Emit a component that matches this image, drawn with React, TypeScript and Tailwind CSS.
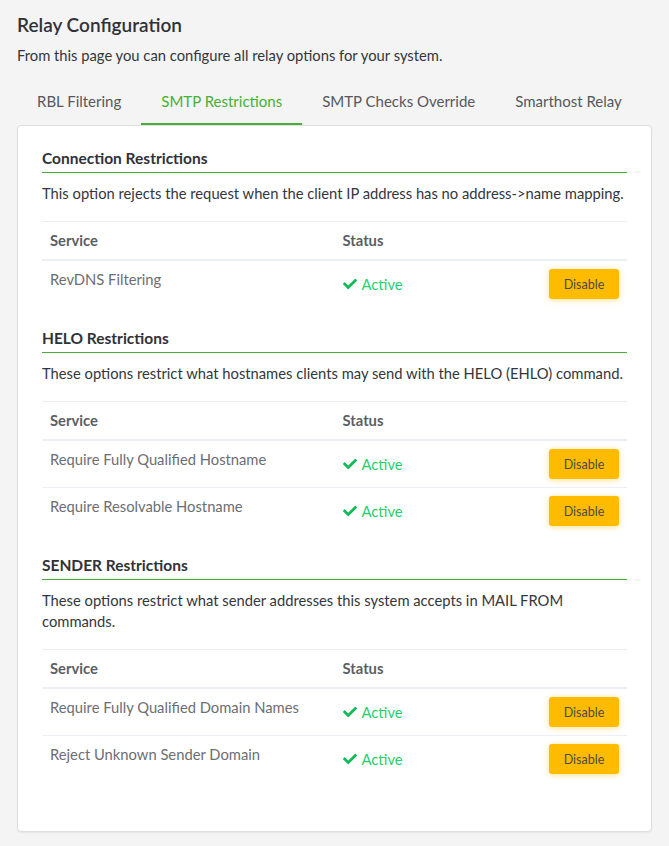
import React from "react";
import { FaCheck } from "react-icons/fa";

type Row = { name: string };
type Section = { title: string; description: string; rows: Row[] };

const sections: Section[] = [
  {
    title: "Connection Restrictions",
    description:
      "This option rejects the request when the client IP address has no address->name mapping.",
    rows: [{ name: "RevDNS Filtering" }],
  },
  {
    title: "HELO Restrictions",
    description:
      "These options restrict what hostnames clients may send with the HELO (EHLO) command.",
    rows: [
      { name: "Require Fully Qualified Hostname" },
      { name: "Require Resolvable Hostname" },
    ],
  },
  {
    title: "SENDER Restrictions",
    description:
      "These options restrict what sender addresses this system accepts in MAIL FROM commands.",
    rows: [
      { name: "Require Fully Qualified Domain Names" },
      { name: "Reject Unknown Sender Domain" },
    ],
  },
];

const tabs = ["RBL Filtering", "SMTP Restrictions", "SMTP Checks Override", "Smarthost Relay"];

function RestrictionSection({ section }: { section: Section }) {
  return (
    <section>
      <h3 className="text-[15.5px] leading-[22px] font-bold text-[#2f3237] pb-[3px] border-b border-b-[#45b035]">
        {section.title}
      </h3>
      <p className="mt-[10px] text-[14.75px] leading-[21px] text-[#33363b]">{section.description}</p>
      <table className="mt-[17px] mb-5 w-full border-collapse text-[14.75px] leading-[21px]">
        <thead>
          <tr className="border-t border-t-[#eceef1] border-b-2 border-b-[#eceff3]">
            <th className="w-1/2 px-2 py-2 text-left font-bold text-[#5b5e63]">Service</th>
            <th className="px-2 py-2 text-left font-bold text-[#5b5e63]">Status</th>
            <th className="px-2 py-2" />
          </tr>
        </thead>
        <tbody>
          {section.rows.map((row, i) => (
            <tr
              key={row.name}
              className={i < section.rows.length - 1 ? "border-b border-b-[#eceff3]" : ""}
            >
              <td className="px-2 pt-2 pb-2 align-top text-[#6b6e73]">{row.name}</td>
              <td className="px-2 py-2 align-middle">
                <span className="flex items-center gap-[5px] text-[#25d16d]">
                  <FaCheck className="text-[#16b85a]" size={14} />
                  Active
                </span>
              </td>
              <td className="px-2 py-2 text-right align-middle">
                <button className="h-[30px] w-[70px] rounded-[3px] bg-[#ffbb00] text-[12.5px] text-[#4a4a4a] shadow-[0_1px_6px_rgba(255,187,0,0.45)]">
                  Disable
                </button>
              </td>
            </tr>
          ))}
        </tbody>
      </table>
    </section>
  );
}

export default function App() {
  return (
    <div
      className="min-h-[846px] bg-[#f4f4f4] px-[17px] pt-[11px] pb-[14px] text-[#33363b]"
      style={{ fontFamily: "Lato, 'Noto Sans', Arial, sans-serif" }}
    >
      <h1 className="text-[19px] leading-[27px] font-semibold text-[#2f3237]">Relay Configuration</h1>
      <p className="mt-[7px] text-[14.75px] leading-[21px]">
        From this page you can configure all relay options for your system.
      </p>
      <nav className="mt-[12px] flex">
        {tabs.map((t) => {
          const active = t === "SMTP Restrictions";
          return (
            <div
              key={t}
              className={
                active
                  ? "px-5 pt-[13px] pb-[11px] text-[15px] leading-[21px] text-[#45b035] border-b-2 border-b-[#45b035]"
                  : "px-5 pt-[13px] pb-[11px] text-[15px] leading-[21px] text-[#55585d] border-b-2 border-b-transparent"
              }
            >
              {t}
            </div>
          );
        })}
      </nav>
      <div className="rounded-[4px] border border-[#dedede] bg-white px-6 pt-[21px] pb-[29px] shadow-[0_1px_2px_rgba(0,0,0,0.06)]">
        {sections.map((s) => (
          <RestrictionSection key={s.title} section={s} />
        ))}
      </div>
    </div>
  );
}
